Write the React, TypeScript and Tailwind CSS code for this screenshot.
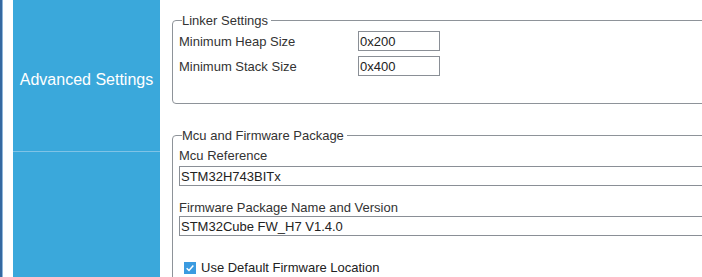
// Project settings pane — blue section rail on the left, grouped settings
// (linker + MCU/firmware) on the right, cut off by the window edge.
const FONT = "font-['Liberation_Sans',Arial,sans-serif]";

function Field({ value, className = '' }: { value: string; className?: string }) {
  return (
    <div className={`h-[20px] border border-[#8a8f96] bg-white flex items-center pl-[1px] text-[13px] text-[#222] leading-none ${className}`}>
      {value}
    </div>
  );
}

function Group({ title, className = '', children }: { title: string; className?: string; children: React.ReactNode }) {
  return (
    <fieldset className={`ml-[12px] w-[900px] border border-[#8e9399] rounded-[4px] pl-[6px] ${className}`}>
      <legend className="ml-[3px] px-0 pr-[3px] text-[13px] leading-[15px] text-[#333]">{title}</legend>
      {children}
    </fieldset>
  );
}

export default function App() {
  return (
    <div className={`${FONT} w-[702px] h-[277px] overflow-hidden bg-white flex`}>
      {/* window edge */}
      <div className="w-[3px] flex-shrink-0 border-l-2 border-[#3568a0] bg-[#8fb6da]" />
      <div className="w-[10px] flex-shrink-0" />

      {/* section rail */}
      <aside className="w-[147px] flex-shrink-0 bg-[#3aa8db] flex flex-col">
        <div className="h-[152px] pt-[8px] flex items-center justify-center border-b border-[#7fc3e6]">
          <span className="text-[16px] leading-[18px] text-white">Advanced Settings</span>
        </div>
      </aside>

      {/* settings — wider than the window, clipped on the right */}
      <main className="w-[940px] flex-shrink-0">
        <Group title="Linker Settings" className="mt-[13px] pb-[27px]">
          <div className="mt-[3px] flex flex-col gap-[5px]">
            {[['Minimum Heap Size', '0x200'], ['Minimum Stack Size', '0x400']].map(([label, value]) => (
              <div key={label} className="flex items-center">
                <span className="w-[179px] pt-[1px] text-[13px] leading-[15px] text-[#333]">{label}</span>
                <Field value={value} className="w-[82px]" />
              </div>
            ))}
          </div>
        </Group>

        <Group title="Mcu and Firmware Package" className="mt-[24px] pb-[40px]">
          <div className="mt-[5px] text-[13px] leading-[15px] text-[#333]">Mcu Reference</div>
          <Field value="STM32H743BITx" className="mt-[3px] w-[860px]" />
          <div className="mt-[14px] text-[13px] leading-[15px] text-[#333]">Firmware Package Name and Version</div>
          <Field value="STM32Cube FW_H7 V1.4.0" className="mt-[1px] w-[860px]" />
          <label className="mt-[24px] ml-[5px] flex items-center gap-[5px] text-[13px] leading-[15px] text-[#222]">
            <span className="w-[12px] h-[12px] bg-[#3b9be0] grid place-items-center">
              <svg viewBox="0 0 12 12" width="10" height="10">
                <path d="M2 6.2 L4.8 9 L10 3" fill="none" stroke="white" strokeWidth="1.8" />
              </svg>
            </span>
            Use Default Firmware Location
          </label>
        </Group>
      </main>
    </div>
  );
}
